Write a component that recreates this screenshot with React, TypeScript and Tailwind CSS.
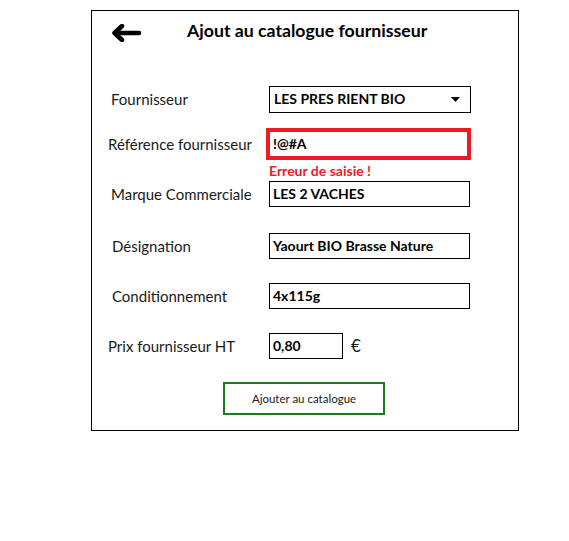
import React from 'react';

const font = { fontFamily: 'Lato, "Noto Sans", sans-serif' };

const Field: React.FC<{ value: string; width?: string }> = ({ value, width = 'w-[201px]' }) => (
  <div className={`${width} h-[26px] border border-black flex items-center pl-[3px] pb-[2px] text-[14px] font-bold text-black`}>
    {value}
  </div>
);

const Row: React.FC<{ label: string; pad?: string; children: React.ReactNode; className?: string }> = ({
  label,
  pad = 'pl-[19px]',
  children,
  className = '',
}) => (
  <div className={`flex items-center ${className}`}>
    <div className={`w-[177px] ${pad} text-[15px] text-[#1a1a1a]`}>{label}</div>
    {children}
  </div>
);

export default function App() {
  return (
    <div className="pl-[91px] pt-[10px] bg-white min-h-[541px]" style={font}>
      <div className="w-[428px] h-[421px] border border-black flex flex-col">
        <div className="h-[43px] flex items-center pl-[19px]">
          <svg width="31" height="18" viewBox="0 0 31 18" fill="none" stroke="black" strokeWidth="4.5" strokeLinecap="round" strokeLinejoin="round">
            <path d="M28 9 H4" />
            <path d="M11 2 L3.5 9 L11 16" />
          </svg>
          <h1 className="ml-[45px] text-[17.7px] font-bold text-black pb-[2px]">Ajout au catalogue fournisseur</h1>
        </div>

        <Row label="Fournisseur" className="mt-[32px]">
          <div className="w-[202px] h-[27px] border border-black flex items-center pl-[4px] pr-[10px] text-[14px] font-bold text-black">
            <span className="flex-1 pb-[2px]">LES PRES RIENT BIO</span>
            <svg width="9" height="5" viewBox="0 0 9 5">
              <path d="M0 0 H9 L4.5 5 Z" fill="black" />
            </svg>
          </div>
        </Row>

        <div className="flex items-center mt-[15px]">
          <div className="w-[174px] pl-[16px] text-[15px] text-[#1a1a1a]">Référence fournisseur</div>
          <div className="w-[205px] h-[32px] border-[4px] border-[#ed1c24] flex items-center pl-[3px] pb-[2px] text-[14px] font-bold text-black">
            !@#A
          </div>
        </div>
        <div className="h-[21px] flex items-center pl-[177px] text-[14px] font-bold text-[#ed1c24]">Erreur de saisie !</div>

        <Row label="Marque Commerciale">
          <Field value="LES 2 VACHES" />
        </Row>

        <Row label="Désignation" pad="pl-[20px]" className="mt-[26px]">
          <Field value="Yaourt BIO Brasse Nature" />
        </Row>

        <Row label="Conditionnement" pad="pl-[20px]" className="mt-[24px]">
          <Field value="4x115g" />
        </Row>

        <Row label="Prix fournisseur HT" pad="pl-[16px]" className="mt-[24px]">
          <Field value="0,80" width="w-[74px]" />
          <span className="ml-[8px] text-[17px] text-[#1a1a1a]">€</span>
        </Row>

        <button className="mt-[23px] ml-[131px] w-[162px] h-[33px] border-2 border-[#1f7a1f] text-[11.5px] text-[#1a1a1a] bg-white">
          Ajouter au catalogue
        </button>
      </div>
    </div>
  );
}
